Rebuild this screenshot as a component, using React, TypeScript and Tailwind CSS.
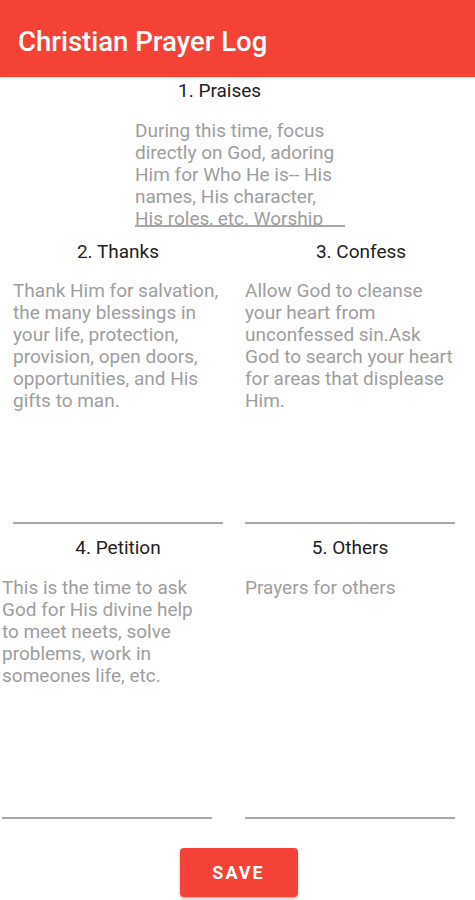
const sections = {
  praises:
    'During this time, focus directly on God, adoring Him for Who He is-- His names, His character, His roles, etc. Worship',
  thanks:
    'Thank Him for salvation, the many blessings in your life, protection, provision, open doors, opportunities, and His gifts to man.',
  confess:
    'Allow God to cleanse your heart from unconfessed sin.Ask God to search your heart for areas that displease Him.',
  petition:
    'This is the time to ask God for His divine help to meet neets, solve problems, work in someones life, etc.',
  others: 'Prayers for others',
}

const Field = ({ text, height, className = '' }: { text: string; height: string; className?: string }) => (
  <div className={`flex flex-col ${className}`}>
    <div className={`overflow-hidden text-[19px] leading-[22px] text-[#9e9e9e] ${height}`}>{text}</div>
    <div className="h-[2px] bg-[#a8a8a8]" />
  </div>
)

export default function App() {
  return (
    <div className="w-[475px] h-[900px] bg-white overflow-hidden font-['Roboto',sans-serif] flex flex-col">
      <header className="h-[77px] bg-[#f44336] flex items-center px-[18px] pt-[6px] shadow-sm">
        <h1 className="text-white text-[27.5px] font-medium">Christian Prayer Log</h1>
      </header>

      <section className="flex flex-col mt-[3px]">
        <h2 className="ml-[178px] text-[19px] leading-[22px] text-[#212121]">1. Praises</h2>
        <Field className="ml-[135px] w-[210px] mt-[18px]" height="h-[105px]" text={sections.praises} />
      </section>

      <section className="grid grid-cols-[210px_210px] gap-x-[22px] ml-[13px] mt-[14px]">
        <h2 className="text-center text-[19px] leading-[22px] text-[#212121]">2. Thanks</h2>
        <h2 className="text-center pl-[22px] text-[19px] leading-[22px] text-[#212121]">3. Confess</h2>
        <Field className="mt-[17px]" height="h-[242px]" text={sections.thanks} />
        <Field className="mt-[17px]" height="h-[242px]" text={sections.confess} />
      </section>

      <section className="grid grid-cols-[210px_210px] gap-x-[33px] ml-[2px] mt-[13px]">
        <h2 className="text-center pl-[22px] text-[19px] leading-[22px] text-[#212121]">4. Petition</h2>
        <h2 className="text-center text-[19px] leading-[22px] text-[#212121]">5. Others</h2>
        <Field className="mt-[18px]" height="h-[240px]" text={sections.petition} />
        <Field className="mt-[18px]" height="h-[240px]" text={sections.others} />
      </section>

      <div className="flex justify-center mt-[29px]">
        <button className="w-[118px] h-[49px] ml-[2px] rounded-[4px] bg-[#f44336] text-white text-[18px] font-bold tracking-[2px] shadow-[0_2px_3px_rgba(0,0,0,0.25)]">
          SAVE
        </button>
      </div>
    </div>
  )
}
